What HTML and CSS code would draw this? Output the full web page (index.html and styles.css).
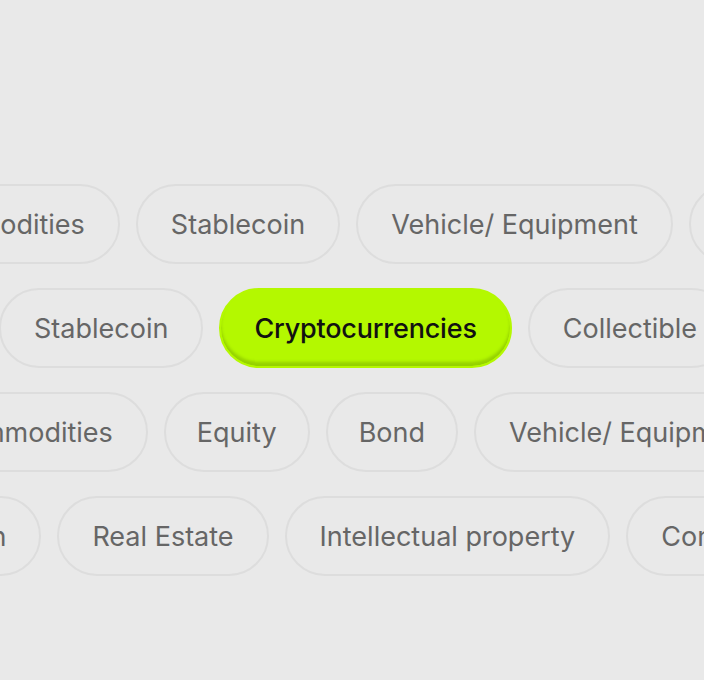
FILE: index.html
```html
<!DOCTYPE html>
<html>
<head>
<meta charset="utf-8">
<link rel="stylesheet" href="styles.css">
</head>
<body>
<div class="stage">
  <div class="row row-1">
    <span class="pill">Commodities</span>
    <span class="pill">Stablecoin</span>
    <span class="pill">Vehicle/ Equipment</span>
    <span class="pill">Collectible</span>
  </div>
  <div class="row row-2">
    <span class="pill">Stablecoin</span>
    <span class="pill pill-active">Cryptocurrencies</span>
    <span class="pill">Collectible</span>
  </div>
  <div class="row row-3">
    <span class="pill">Commodities</span>
    <span class="pill pill-short">Equity</span>
    <span class="pill pill-short">Bond</span>
    <span class="pill">Vehicle/ Equipment</span>
  </div>
  <div class="row row-4">
    <span class="pill">Stablecoin</span>
    <span class="pill">Real Estate</span>
    <span class="pill">Intellectual property</span>
    <span class="pill">Commodities</span>
  </div>
</div>
</body>
</html>
```
FILE: styles.css
```css
html, body {
  margin: 0;
  padding: 0;
  background: #e9e9e9;
}
body {
  width: 704px;
  height: 680px;
  overflow: hidden;
  font-family: Inter, "Noto Sans", sans-serif;
}
.stage {
  display: flex;
  flex-direction: column;
  gap: 24px;
  padding-top: 184px;
}
.row {
  display: flex;
  gap: 16px;
  white-space: nowrap;
}
.row-1 { margin-left: -118px; }
.row-2 { margin-left: -1px; }
.row-3 { margin-left: -90px; }
.row-4 { margin-left: -163px; }
.pill {
  flex: none;
  box-sizing: border-box;
  height: 80px;
  display: flex;
  align-items: center;
  padding: 0 33px;
  border: 2px solid #dddddd;
  border-radius: 40px;
  font-size: 27px;
  color: #666666;
}
.pill-short {
  padding: 0 31px;
}
.pill-active {
  background: #b4f800;
  border-color: #b4f800;
  color: #111111;
  font-weight: 500;
  letter-spacing: -0.2px;
  box-shadow: inset 0 -4px 3px rgba(80, 120, 0, 0.3);
}
```
